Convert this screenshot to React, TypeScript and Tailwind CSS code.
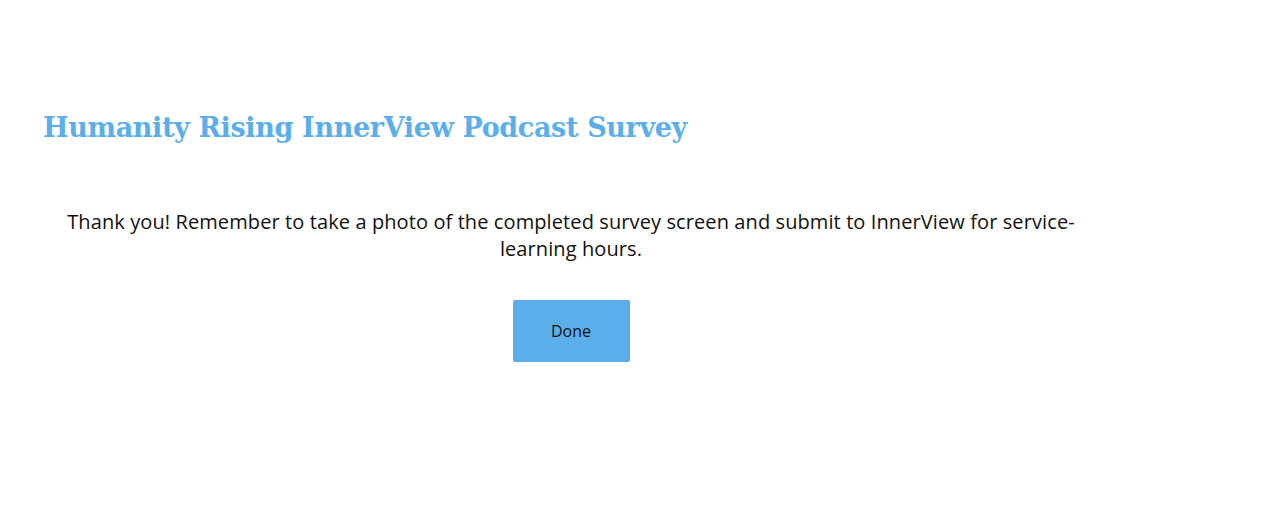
export default function App() {
  return (
    <div className="w-[1280px] h-[512px] bg-white">
      <div className="w-[1056px] ml-[43px] pt-[108px]">
        <h1 className="text-[#5aafeb] font-bold text-[27px] leading-[40px] tracking-[-0.35px]" style={{ fontFamily: '"DejaVu Serif", serif' }}>
          Humanity Rising InnerView Podcast Survey
        </h1>
        <p className="mt-[60px] text-center text-[20px] leading-[27px] tracking-[0.1px] text-[#111111] px-[8px]" style={{ fontFamily: '"Open Sans", sans-serif' }}>
          Thank you! Remember to take a photo of the completed survey screen and submit to InnerView for service-learning hours.
        </p>
        <div className="flex justify-center mt-[38px]">
          <button className="w-[117px] h-[62px] bg-[#5aafeb] rounded-[2px] text-[16px] text-[#111111]" style={{ fontFamily: '"Open Sans", sans-serif' }}>
            Done
          </button>
        </div>
      </div>
    </div>
  );
}
